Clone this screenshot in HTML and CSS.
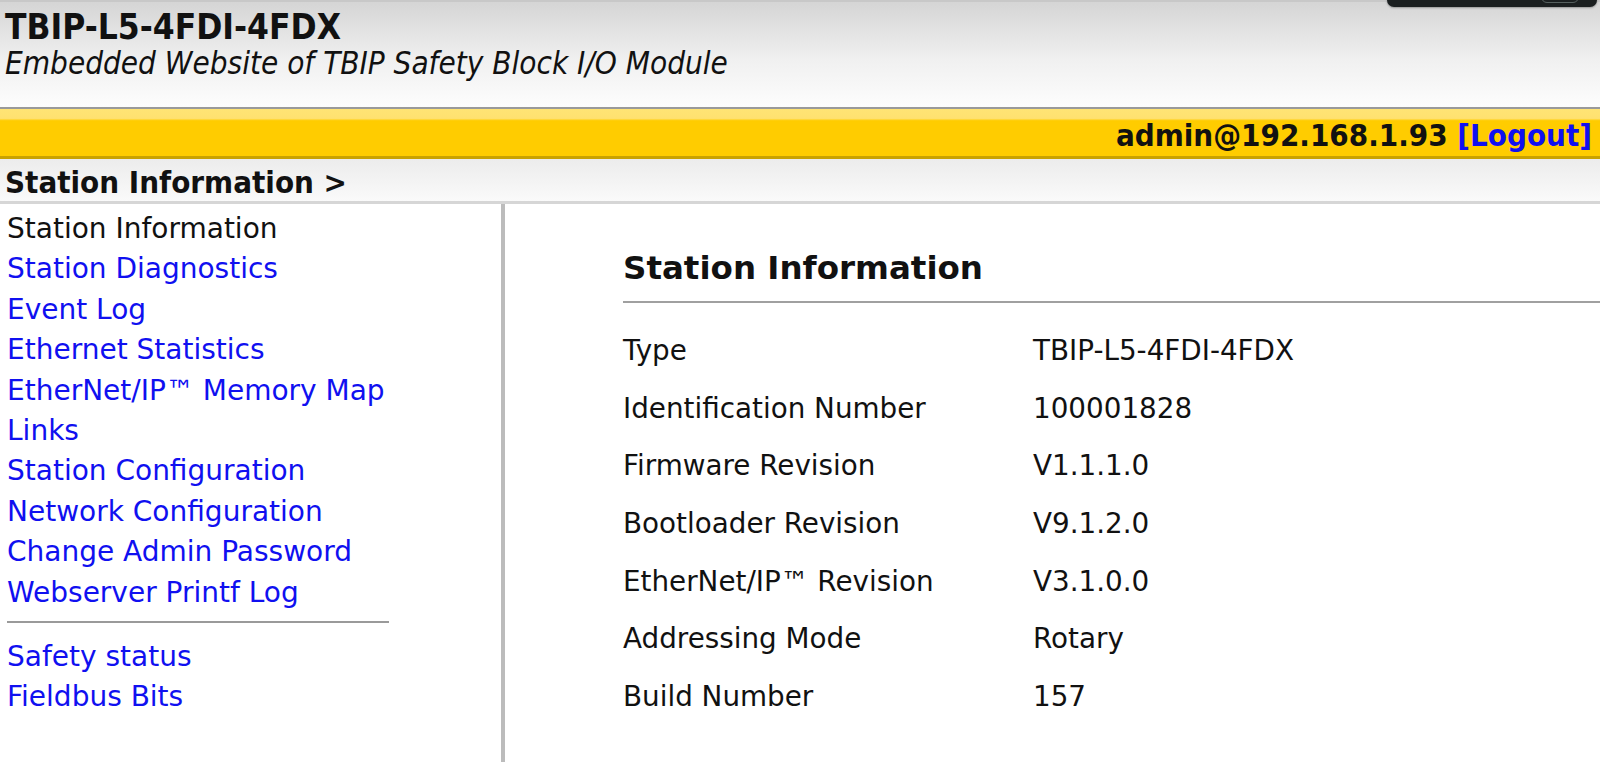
FILE: index.html
```html
<!DOCTYPE html>
<html lang="en">
<head>
    <meta charset="UTF-8">
    <meta name="viewport" content="width=device-width, initial-scale=1.0">
    <title>TBIP-L5-4FDI-4FDX</title>
    <link rel="stylesheet" href="styles.css">
</head>
<body>
    <div class="popup-edge"><span class="popup-btn"></span></div>
    <div class="header">
        <div class="title">TBIP-L5-4FDI-4FDX</div>
        <div class="subtitle">Embedded Website of TBIP Safety Block I/O Module</div>
    </div>
    <div class="userbar">
        admin@192.168.1.93 <a href="#">[Logout]</a>
    </div>
    <div class="breadcrumb">Station Information &gt;</div>
    <div class="main">
        <div class="sidebar">
            <ul class="menu">
                <li class="current">Station Information</li>
                <li><a href="#">Station Diagnostics</a></li>
                <li><a href="#">Event Log</a></li>
                <li><a href="#">Ethernet Statistics</a></li>
                <li><a href="#">EtherNet/IP™ Memory Map</a></li>
                <li><a href="#">Links</a></li>
                <li><a href="#">Station Configuration</a></li>
                <li><a href="#">Network Configuration</a></li>
                <li><a href="#">Change Admin Password</a></li>
                <li><a href="#">Webserver Printf Log</a></li>
            </ul>
            <hr class="menu-sep">
            <ul class="menu">
                <li><a href="#">Safety status</a></li>
                <li><a href="#">Fieldbus Bits</a></li>
            </ul>
        </div>
        <div class="content">
            <h1>Station Information</h1>
            <hr class="content-sep">
            <table class="info">
                <tr><td>Type</td><td>TBIP-L5-4FDI-4FDX</td></tr>
                <tr><td>Identification Number</td><td>100001828</td></tr>
                <tr><td>Firmware Revision</td><td>V1.1.1.0</td></tr>
                <tr><td>Bootloader Revision</td><td>V9.1.2.0</td></tr>
                <tr><td>EtherNet/IP™ Revision</td><td>V3.1.0.0</td></tr>
                <tr><td>Addressing Mode</td><td>Rotary</td></tr>
                <tr><td>Build Number</td><td>157</td></tr>
            </table>
        </div>
    </div>
</body>
</html>
```

FILE: styles.css
```css
html, body {
    margin: 0;
    padding: 0;
}
body {
    font-family: "DejaVu Sans", Verdana, sans-serif;
    color: #111;
    background: #fff;
    overflow: hidden;
    height: 762px;
}
a {
    color: #1010f0;
    text-decoration: none;
}
.popup-edge {
    position: absolute;
    left: 1387px;
    top: -10px;
    width: 210px;
    height: 17px;
    background: #1b1f20;
    border-radius: 7px;
    box-shadow: 0 1px 2px rgba(0,0,0,0.3);
}
.popup-btn {
    position: absolute;
    right: 18px;
    top: 0;
    width: 36px;
    height: 11px;
    border: 1px solid #56605f;
    border-radius: 6px;
}
.header {
    height: 105px;
    padding: 0 5px;
    border-top: 2px solid #c8c8c8;
    background: linear-gradient(#d5d5d5, #f0f0f0 55%, #fdfdfd);
    font-family: "DejaVu Sans Condensed", "DejaVu Sans", sans-serif;
}
.title {
    font-size: 35px;
    font-weight: bold;
    line-height: 36px;
    padding-top: 7px;
}
.subtitle {
    font-size: 31.2px;
    font-style: italic;
    line-height: 36px;
}
.userbar {
    height: 47px;
    border-top: 2px solid #9a9a9a;
    border-bottom: 3px solid #c9a200;
    background: linear-gradient(#ffe474, #ffe170 20%, #ffcc00 25%, #ffcc00);
    text-align: right;
    padding-right: 8px;
    font-family: "DejaVu Sans Condensed", "DejaVu Sans", sans-serif;
    font-size: 31px;
    font-weight: bold;
    line-height: 52px;
}
.breadcrumb {
    height: 42px;
    padding-left: 5px;
    border-bottom: 3px solid #d6d6d6;
    background: linear-gradient(#ececec, #fafafa);
    font-family: "DejaVu Sans Condensed", "DejaVu Sans", sans-serif;
    font-size: 31px;
    font-weight: bold;
    line-height: 46px;
}
.main {
    display: flex;
    height: 560px;
}
.sidebar {
    width: 494px;
    border-right: 4px solid #bcbcbc;
    padding: 5px 0 0 7px;
    flex-shrink: 0;
}
.menu {
    list-style: none;
    margin: 0;
    padding: 0;
    font-size: 28px;
    line-height: 40.4px;
}
.menu .current {
    color: #111;
}
.menu-sep {
    width: 382px;
    margin: 8px 0 14px 0;
    border: none;
    border-top: 2px solid #9a9a9a;
}
.content {
    flex: 1;
    padding: 43px 0 0 118px;
}
.content h1 {
    margin: 0;
    font-size: 32.5px;
    line-height: 42px;
}
.content-sep {
    margin: 12px 0 19px 0;
    border: none;
    border-top: 2px solid #a0a0a0;
}
.info {
    border-collapse: collapse;
    font-size: 27.8px;
}
.info td {
    padding: 0;
    height: 57.6px;
    vertical-align: middle;
}
.info td:first-child {
    width: 410px;
}
```
